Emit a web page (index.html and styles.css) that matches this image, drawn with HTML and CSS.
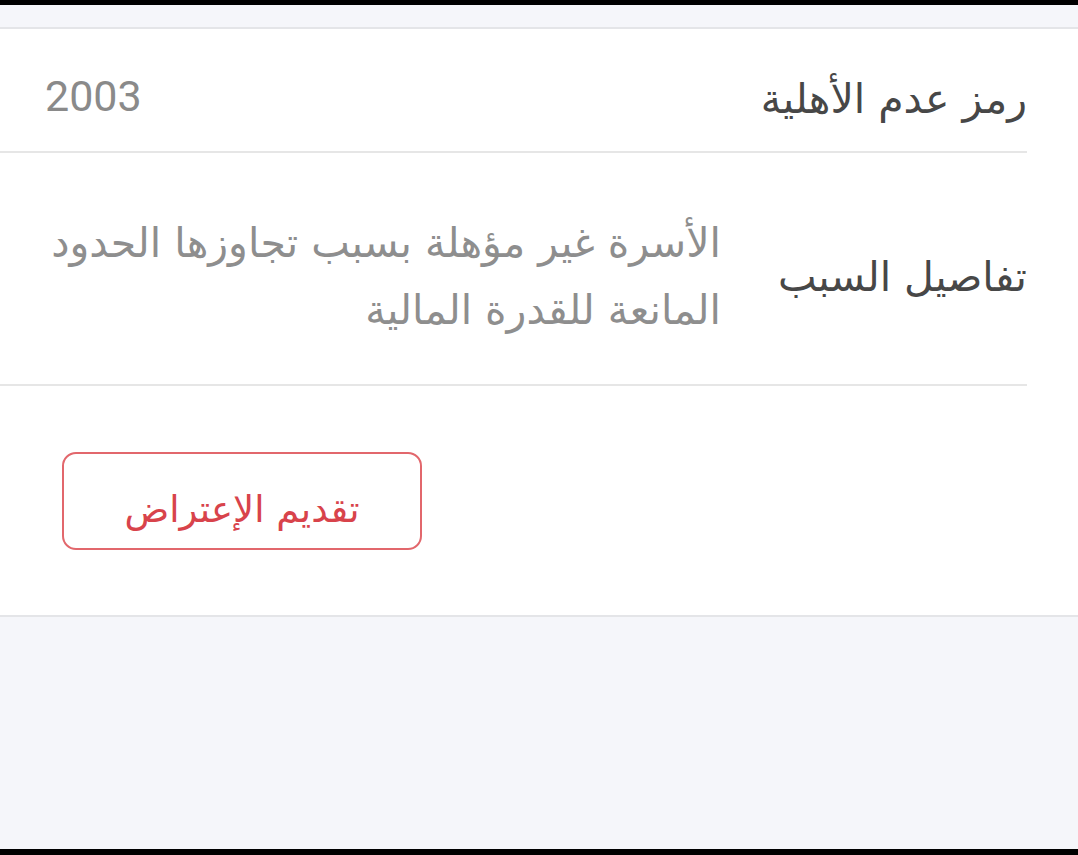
FILE: index.html
```html
<!DOCTYPE html>
<html lang="ar" dir="rtl">
<head>
<meta charset="utf-8">
<link rel="stylesheet" href="styles.css">
</head>
<body>
<div class="topbar"></div>
<div class="page">
  <div class="spacer-top"></div>
  <section class="card">
    <div class="row row-one">
      <div class="label">رمز عدم الأهلية</div>
      <div class="value num">2003</div>
    </div>
    <div class="row row-two">
      <div class="label">تفاصيل السبب</div>
      <div class="value multi">الأسرة غير مؤهلة بسبب تجاوزها الحدود المانعة للقدرة المالية</div>
    </div>
    <div class="actions">
      <button class="btn">تقديم الإعتراض</button>
    </div>
  </section>
  <div class="spacer-bottom"></div>
</div>
<div class="bottombar"></div>
</body>
</html>
```

FILE: styles.css
```css
html, body {
  margin: 0;
  padding: 0;
}
body {
  width: 1078px;
  height: 855px;
  display: flex;
  flex-direction: column;
  background: #f5f6fa;
  font-family: "DejaVu Sans", sans-serif;
  overflow: hidden;
}
.topbar {
  height: 5px;
  background: #000;
  flex: none;
}
.bottombar {
  height: 6px;
  background: #000;
  flex: none;
}
.page {
  flex: 1;
  display: flex;
  flex-direction: column;
}
.spacer-top {
  height: 22px;
  border-bottom: 2px solid #e4e5e8;
}
.card {
  background: #fff;
  border-bottom: 2px solid #e4e5e8;
  padding-right: 51px;
}
.spacer-bottom {
  flex: 1;
}
.row {
  box-sizing: border-box;
  display: flex;
  justify-content: space-between;
  align-items: center;
  border-bottom: 2px solid #e6e6e6;
  padding-left: 45px;
  padding-top: 12px;
}
.row-one {
  height: 124px;
}
.row-one .label {
  padding-top: 6px;
}
.row-two {
  height: 233px;
  padding-top: 16px;
}
.label {
  font-size: 41px;
  color: #474747;
  white-space: nowrap;
}
.value {
  font-size: 41px;
  color: #8e8e8e;
}
.num {
  font-family: Roboto, sans-serif;
  font-size: 43px;
  color: #8a8a8a;
}
.multi {
  width: 676px;
  line-height: 67px;
}
.actions {
  height: 229px;
  display: flex;
  align-items: center;
  justify-content: flex-end;
  padding-left: 62px;
}
.btn {
  width: 360px;
  height: 98px;
  background: #fff;
  border: 2px solid #e2676c;
  border-radius: 14px;
  color: #d8434b;
  font-family: inherit;
  font-size: 37px;
  padding: 18px 0 0;
  cursor: pointer;
}
```
